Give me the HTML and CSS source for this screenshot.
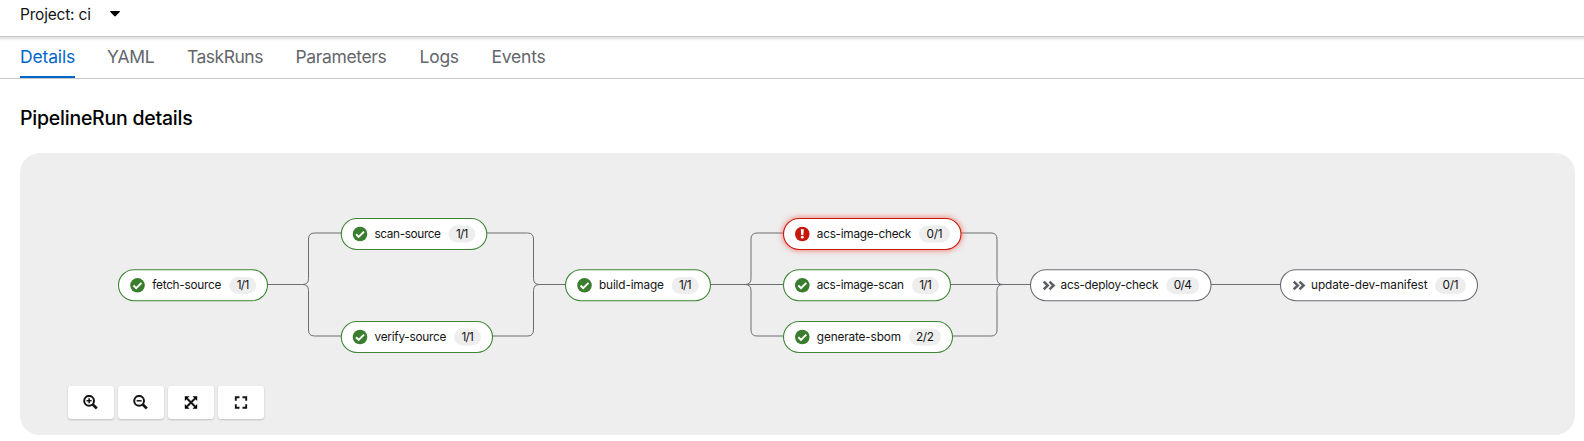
FILE: index.html
```
<!DOCTYPE html>
<html lang="en">
<head>
<meta charset="utf-8">
<title>PipelineRun details</title>
<link rel="stylesheet" href="styles.css">
</head>
<body>
<header class="project-bar">
  <span class="project-name">Project: ci</span>
  <svg class="caret" width="10" height="6" viewBox="0 0 10 6"><path d="M.7 0h8.600q1 .2.400 1.100L5.800 5q-.8.800-1.600 0L.3 1.100Q-.3.200.700 0z"/></svg>
</header>
<nav class="tabs">
  <a class="tab tab-details active">Details</a>
  <a class="tab tab-yaml">YAML</a>
  <a class="tab tab-taskruns">TaskRuns</a>
  <a class="tab tab-parameters">Parameters</a>
  <a class="tab tab-logs">Logs</a>
  <a class="tab tab-events">Events</a>
</nav>
<main class="content">
  <h2 class="title">PipelineRun details</h2>
  <section class="panel">
    <svg class="graph" width="1555" height="233" viewBox="20 153 1555 233">
      <defs>
        <g id="ok"><circle r="7.3" fill="#3a7d2e"/><path d="M-4 .2-1.3 2.9 4-2.4" fill="none" stroke="#fff" stroke-width="2"/></g>
        <g id="fail"><circle r="7.3" fill="#c7190b"/><path d="M-1.5-4.7h3L1.1.9h-2.2z" fill="#fff"/><circle cy="3.2" r="1.4" fill="#fff"/></g>
        <path id="skip" d="M-5.3-3.9-1.2 0l-4.1 3.9M.5-3.9 4.6 0 .5 3.9" fill="none" stroke="#5b5e63" stroke-width="2.5"/>
        <filter id="glow" x="-10%" y="-50%" width="120%" height="200%"><feGaussianBlur stdDeviation="3"/></filter>
      </defs>
      <g class="edges">
        <path d="M268 284.5H302.500Q308.500 284.500 308.500 278.500V239Q308.500 233 314.500 233H341"/>
        <path d="M302.500 284.500Q308.500 284.500 308.500 290.500V330Q308.500 336 314.500 336H341"/>
        <path d="M487 233H527.500Q533.500 233 533.500 239V278.500Q533.500 284.500 539.500 284.500H565"/>
        <path d="M493 336H527.500Q533.500 336 533.500 330V290.500Q533.500 284.500 539.500 284.500"/>
        <path d="M711 284.500H783"/>
        <path d="M745 284.500Q751 284.500 751 278.500V239Q751 233 757 233H783"/>
        <path d="M745 284.500Q751 284.500 751 290.500V330Q751 336 757 336H783"/>
        <path d="M951 284.500H1030"/>
        <path d="M961 233H991Q997 233 997 239V278.500Q997 284.500 1003 284.500"/>
        <path d="M953 336H991Q997 336 997 330V290.500Q997 284.500 1003 284.500"/>
        <path d="M1211 284.500H1280"/>
      </g>
      <g class="node ok">
        <rect class="pill" x="118.500" y="269.700" width="149" height="31" rx="15.500"/><use href="#ok" x="137.500" y="285.300"/>
        <text x="152.300" y="289.300" textLength="69">fetch-source</text>
        <rect class="badge" x="229.300" y="277" width="27" height="17" rx="8.500"/><text x="236.700" y="289.300" textLength="12.500">1/1</text>
      </g>
      <g class="node ok">
        <rect class="pill" x="341.300" y="218.500" width="145.500" height="31" rx="15.500"/><use href="#ok" x="360" y="234"/>
        <text x="374.500" y="238" textLength="66.500">scan-source</text>
        <rect class="badge" x="448.500" y="225.500" width="27" height="17" rx="8.500"/><text x="455.900" y="238" textLength="12.500">1/1</text>
      </g>
      <g class="node ok">
        <rect class="pill" x="341.300" y="321.500" width="151.200" height="31" rx="15.500"/><use href="#ok" x="360" y="337"/>
        <text x="374.500" y="341" textLength="72">verify-source</text>
        <rect class="badge" x="454" y="328.500" width="27" height="17" rx="8.500"/><text x="461.400" y="341" textLength="12.500">1/1</text>
      </g>
      <g class="node ok">
        <rect class="pill" x="565.500" y="269.700" width="145" height="31" rx="15.500"/><use href="#ok" x="584.500" y="285.300"/>
        <text x="599" y="289.300" textLength="65">build-image</text>
        <rect class="badge" x="671.700" y="277" width="27" height="17" rx="8.500"/><text x="679" y="289.300" textLength="12.500">1/1</text>
      </g>
      <rect class="halo" x="783" y="218" width="178.500" height="32" rx="16"/>
      <g class="node fail">
        <rect class="pill" x="783.500" y="218.500" width="177.500" height="31" rx="15.500"/><use href="#fail" x="802.300" y="234"/>
        <text x="816.800" y="238" textLength="94.500">acs-image-check</text>
        <rect class="badge" x="919" y="225.500" width="31" height="17" rx="8.500"/><text x="926.500" y="238" textLength="16">0/1</text>
      </g>
      <g class="node ok">
        <rect class="pill" x="783.500" y="269.700" width="167" height="31" rx="15.500"/><use href="#ok" x="802.300" y="285.300"/>
        <text x="816.800" y="289.300" textLength="87.200">acs-image-scan</text>
        <rect class="badge" x="912" y="277" width="27" height="17" rx="8.500"/><text x="919.200" y="289.300" textLength="12.500">1/1</text>
      </g>
      <g class="node ok">
        <rect class="pill" x="783.500" y="321.500" width="169" height="31" rx="15.500"/><use href="#ok" x="802.300" y="337"/>
        <text x="816.800" y="341" textLength="84.200">generate-sbom</text>
        <rect class="badge" x="909" y="328.500" width="32" height="17" rx="8.500"/><text x="916" y="341" textLength="18">2/2</text>
      </g>
      <g class="node skip">
        <rect class="pill" x="1030.500" y="269.700" width="180.500" height="31" rx="15.500"/><use href="#skip" x="1049" y="285.500"/>
        <text x="1060.500" y="289.300" textLength="98">acs-deploy-check</text>
        <rect class="badge" x="1166.300" y="277" width="33" height="17" rx="8.500"/><text x="1173.800" y="289.300" textLength="18">0/4</text>
      </g>
      <g class="node skip">
        <rect class="pill" x="1280.500" y="269.700" width="197" height="31" rx="15.500"/><use href="#skip" x="1299" y="285.500"/>
        <text x="1311" y="289.300" textLength="116.500">update-dev-manifest</text>
        <rect class="badge" x="1435" y="277" width="31" height="17" rx="8.500"/><text x="1442.500" y="289.300" textLength="16">0/1</text>
      </g>
    </svg>
    <div class="toolbar">
      <button class="tool" aria-label="Zoom in"><svg width="16" height="16" viewBox="0.700 0.500 16 16"><g class="line"><circle cx="6.800" cy="6.300" r="4.900"/><path class="sign" d="M4.300 6.300h5M6.800 3.800v5"/><path class="handle" d="m10.500 10 4 4"/></g></svg></button>
      <button class="tool" aria-label="Zoom out"><svg width="16" height="16" viewBox="0.700 0.500 16 16"><g class="line"><circle cx="6.800" cy="6.300" r="4.900"/><path class="sign" d="M4.300 6.300h5"/><path class="handle" d="m10.500 10 4 4"/></g></svg></button>
      <button class="tool" aria-label="Fit to screen"><svg width="16" height="16" viewBox="0 0.500 16 16"><path class="line" d="m4 4 8 8M12 4l-8 8"/><path d="M1.800 1.800h4.700L1.800 6.500zM14.200 1.800v4.700L9.500 1.800zM1.800 14.200V9.500l4.700 4.700zM14.200 14.200H9.500l4.700-4.700z"/></svg></button>
      <button class="tool" aria-label="Reset view"><svg width="16" height="16" viewBox="0 0.500 16 16"><path class="line corners" d="M2.800 6.200V2.800h3.700M9.500 2.800h3.700v3.400M13.200 9.800v3.400H9.500M6.500 13.200H2.800V9.800"/></svg></button>
    </div>
  </section>
</main>
</body>
</html>
```
FILE: styles.css
```
* { box-sizing: border-box; }
body { margin: 0; height: 441px; overflow: hidden; background: #fff; color: #151515; font-family: Inter, "Liberation Sans", sans-serif; }
.project-bar { height: 37px; padding: 0 20px 8px; display: flex; align-items: center; gap: 20px; border-bottom: 1px solid #c7c7c7; }
.project-name { width: 70px; white-space: nowrap; font-size: 15.5px; letter-spacing: -.2px; }
.caret { fill: #000; }
.tabs { height: 42px; padding: 0 20px; display: flex; gap: 32px; border-bottom: 1px solid #c7c7c7; box-shadow: inset 0 4px 3px -2px #ddd; }
.tab { height: 41px; line-height: 40px; white-space: nowrap; font-size: 17.5px; color: #63666b; }
.tab.active { color: #06c; box-shadow: inset 0 -2px #06c; }
.tab-details { width: 55px; letter-spacing: -.15px; }
.tab-yaml { width: 48px; letter-spacing: -.2px; }
.tab-taskruns { width: 77px; letter-spacing: -.5px; }
.tab-parameters { width: 92px; letter-spacing: -.35px; text-indent: -.6px; }
.tab-logs { width: 40px; letter-spacing: -.3px; text-indent: -.4px; }
.tab-events { width: 55px; letter-spacing: -.2px; text-indent: -.6px; }
.content { padding: 0 9px 0 20px; }
.title { margin: 0; height: 74px; line-height: 78px; font-size: 19.5px; font-weight: 500; letter-spacing: -.23px; color: #000; }
.panel { height: 282px; border-radius: 20px; background: #eee; }
.graph { display: block; font-size: 11.8px; }
.edges { fill: none; stroke: #6a6e73; stroke-width: 1; }
.pill { fill: #fff; stroke-width: 1.1; }
.ok .pill { stroke: #3e8635; }
.fail .pill { stroke: #c9190b; }
.skip .pill { stroke: #6a6e73; }
.halo { fill: #f06a60; filter: url(#glow); }
.badge { fill: #eee; }
.node text { fill: #151515; }
.toolbar { padding-left: 48px; display: flex; gap: 4px; }
.tool { width: 46px; height: 33px; padding: 0; display: flex; align-items: center; justify-content: center; border: 0; border-radius: 3px; background: #fff; box-shadow: 0 1px 2px #0003; }
.line { fill: none; stroke: #151515; stroke-width: 2; }
.sign { stroke-width: 1.5; }
.handle { stroke-width: 2.6; }
.corners { stroke-width: 1.9; }
```
